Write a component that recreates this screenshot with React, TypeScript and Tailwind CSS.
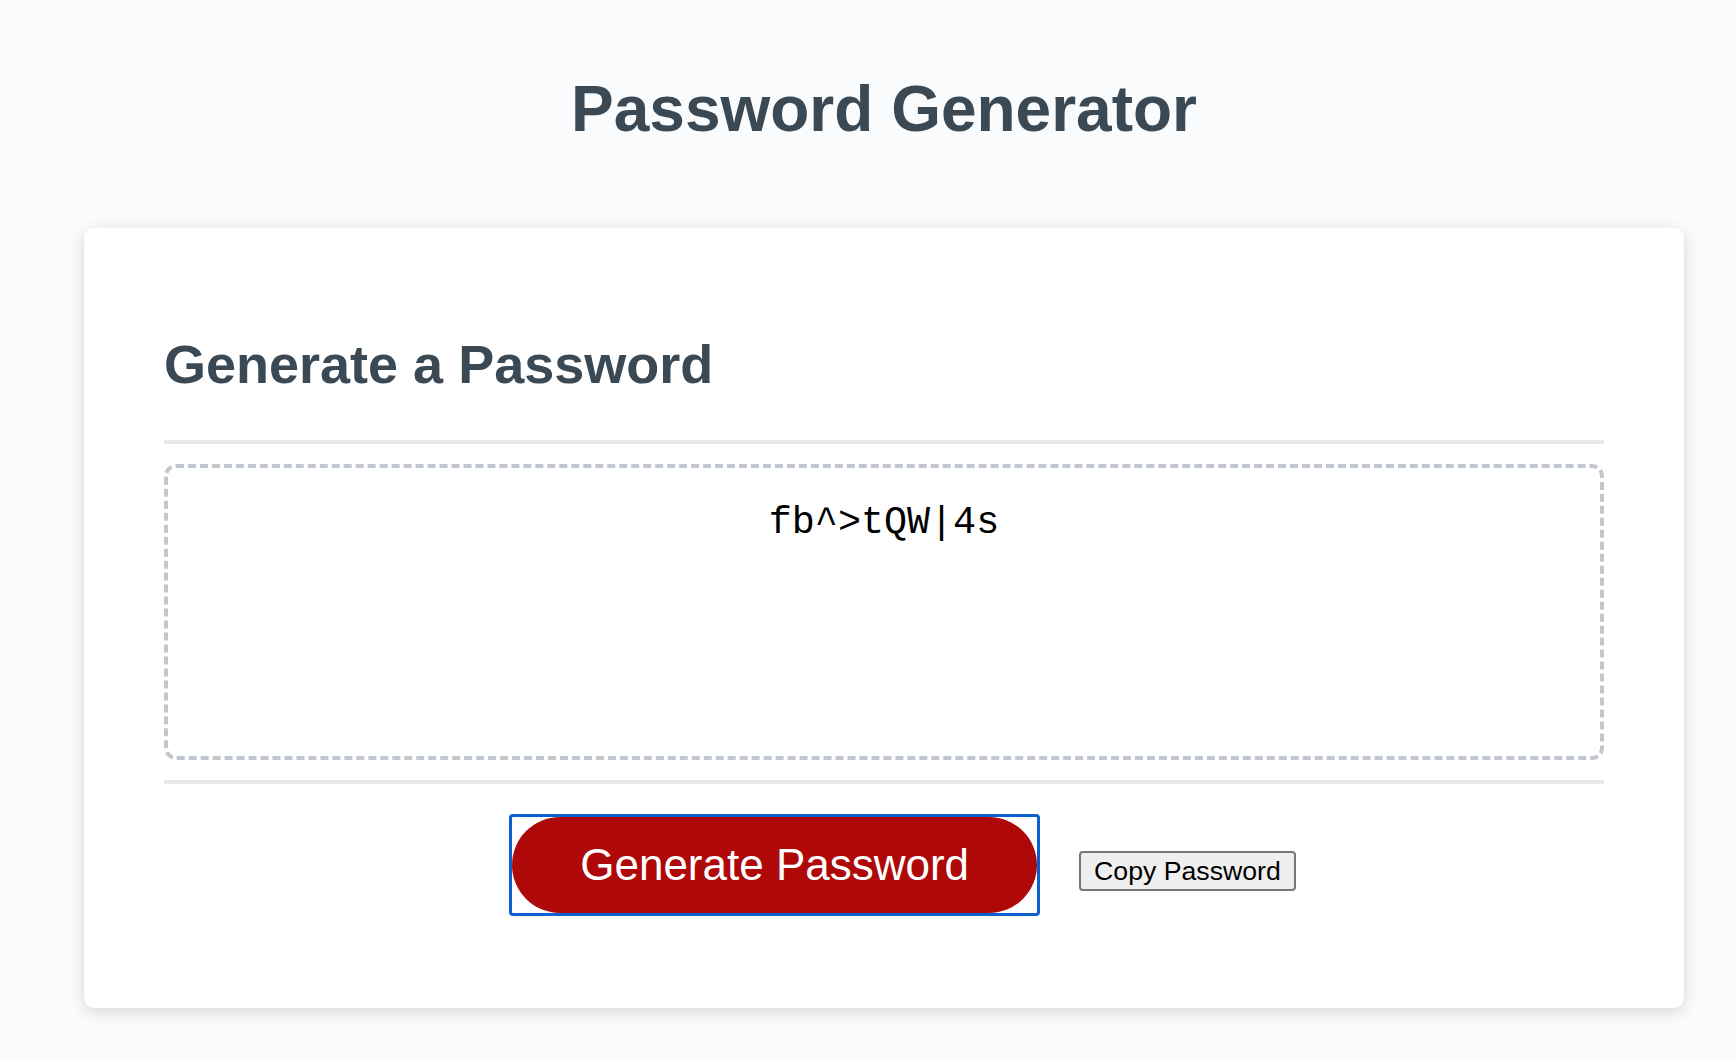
import React from "react";

export default function App() {
  return (
    <div className="min-h-screen bg-[#f9fbfd] pl-[56px] pr-[24px] pt-[72px] pb-[40px] font-['Liberation_Sans',Arial,sans-serif]">
      <header className="px-[40px] pb-[40px] text-center text-[#3b4954]">
        <h1 className="m-0 mb-[42px] text-[64px] font-bold leading-[74px]">Password Generator</h1>
      </header>
      <div className="mx-auto max-w-[1600px] rounded-[10px] bg-white px-[80px] pt-[60px] pb-[62px] text-[36px] text-[#3b4954] shadow-[0_4px_16px_0_rgba(0,0,0,0.15)]">
        <div>
          <h2 className="mt-[45px] mb-[45px] text-[54px] font-bold leading-[62px]">Generate a Password</h2>
          <div className="h-[4px] w-full bg-[#e7e9eb]" />
        </div>
        <div>
          <div className="mt-[20px] mb-[20px] h-[296px] rounded-[12px] border-[4px] border-dashed border-[#c0c7cf] px-[30px] pt-[34px] text-center font-['Liberation_Mono','Courier_New',monospace] text-[38.4px] leading-[43.5px] text-black">
            fb^&gt;tQW|4s
          </div>
        </div>
        <div>
          <div className="h-[4px] w-full bg-[#e7e9eb]" />
          <div className="flex items-baseline justify-center">
            <button
              type="button"
              className="relative ml-[40px] mr-[32px] my-[33px] rounded-full bg-[#af0808] px-[68px] py-[26px] text-[44px] leading-[44px] text-white"
            >
              Generate Password
              <span className="pointer-events-none absolute -inset-[3px] rounded-[4px] border-[3px] border-[#0a60d0]" />
            </button>
            <button
              type="button"
              className="ml-[10px] rounded-[4px] border-2 border-[#767676] bg-[#efefef] px-[13px] py-[2px] text-[26.67px] leading-[32px] text-black"
            >
              Copy Password
            </button>
          </div>
        </div>
      </div>
    </div>
  );
}
